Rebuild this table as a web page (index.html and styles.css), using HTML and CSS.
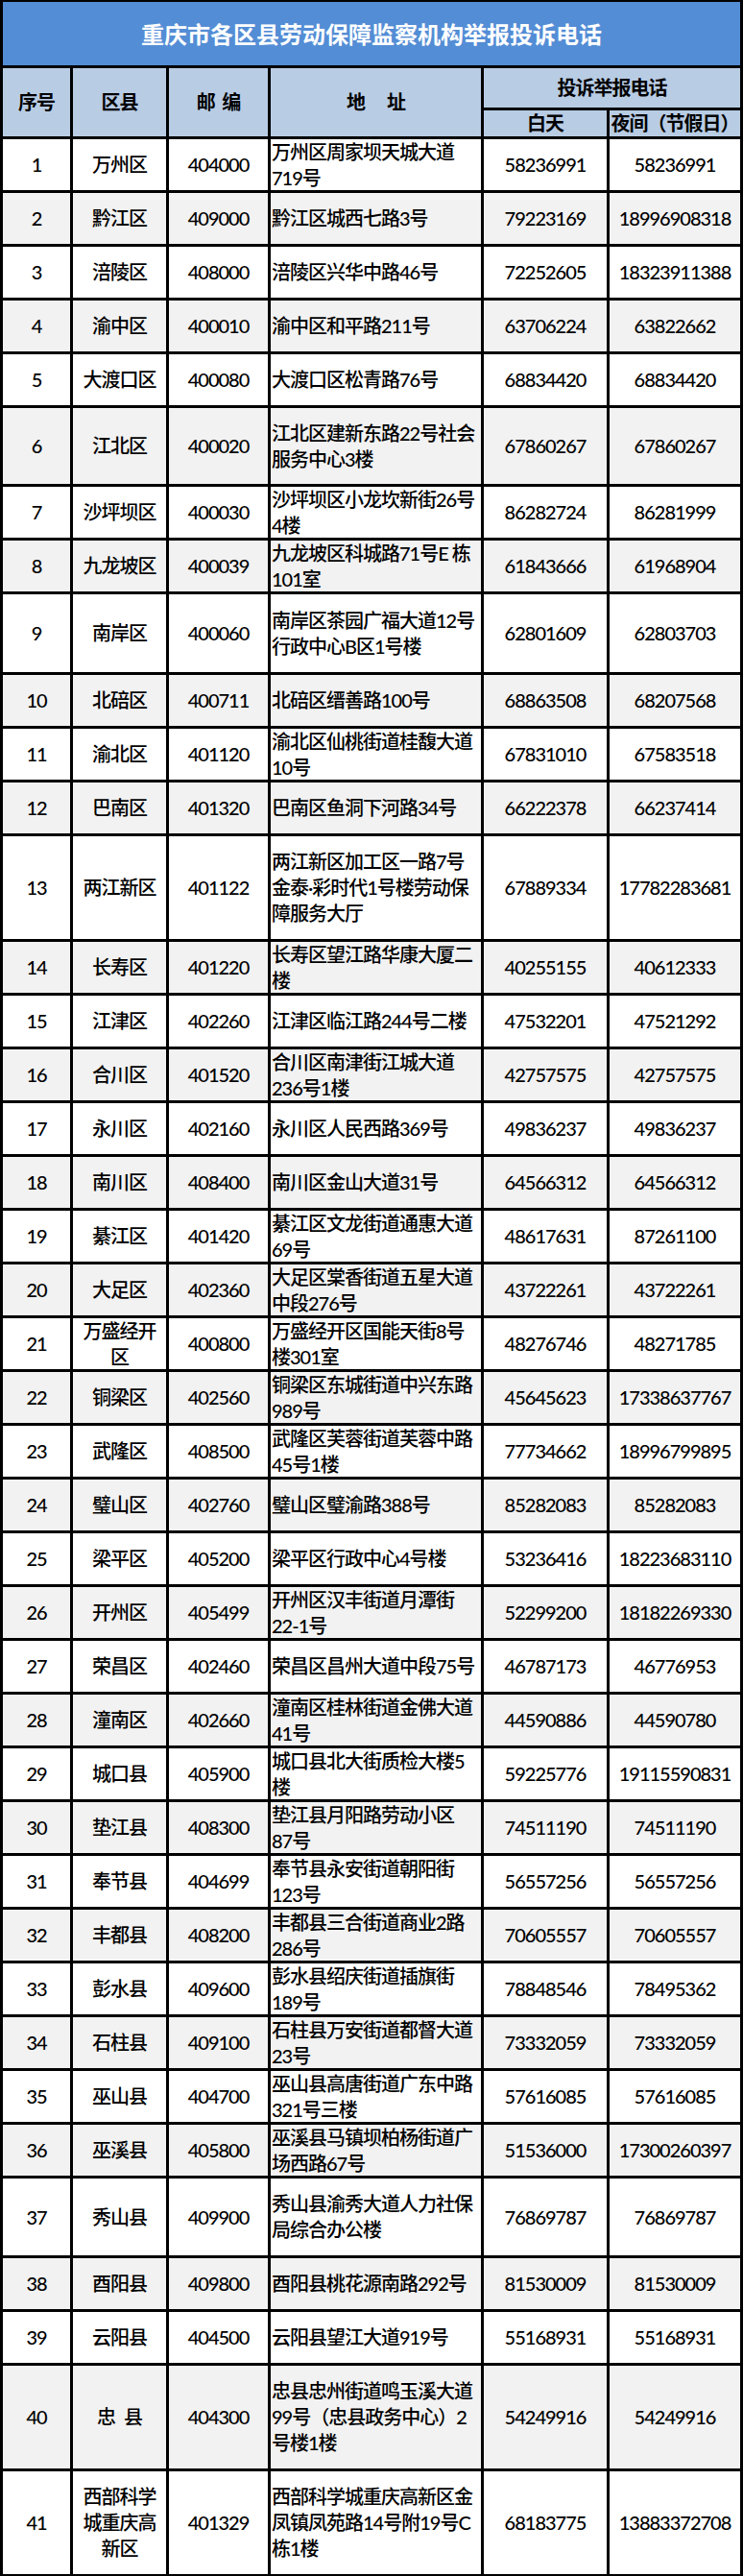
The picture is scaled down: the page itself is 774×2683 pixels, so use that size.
FILE: index.html
```html
<!DOCTYPE html>
<html lang="zh-CN">
<head>
<meta charset="utf-8">
<title>重庆市各区县劳动保障监察机构举报投诉电话</title>
<link rel="stylesheet" href="styles.css">
</head>
<body>
<div class="sheet">
  <div class="title">重庆市各区县劳动保障监察机构举报投诉电话</div>
  <div class="head">
    <div class="hc tall">序号</div>
    <div class="hc tall">区县</div>
    <div class="hc tall">邮&nbsp; 编</div>
    <div class="hc tall">地&emsp;&ensp;址</div>
    <div class="hc wide">投诉举报电话</div>
    <div class="hc">白天</div>
    <div class="hc">夜间（节假日）</div>
  </div>

  <div class="row"><div class="c">1</div><div class="c">万州区</div><div class="c">404000</div><div class="c a">万州区周家坝天城大道<br>719号</div><div class="c">58236991</div><div class="c">58236991</div></div>
  <div class="row g"><div class="c">2</div><div class="c">黔江区</div><div class="c">409000</div><div class="c a">黔江区城西七路3号</div><div class="c">79223169</div><div class="c">18996908318</div></div>
  <div class="row"><div class="c">3</div><div class="c">涪陵区</div><div class="c">408000</div><div class="c a">涪陵区兴华中路46号</div><div class="c">72252605</div><div class="c">18323911388</div></div>
  <div class="row g"><div class="c">4</div><div class="c">渝中区</div><div class="c">400010</div><div class="c a">渝中区和平路211号</div><div class="c">63706224</div><div class="c">63822662</div></div>
  <div class="row"><div class="c">5</div><div class="c">大渡口区</div><div class="c">400080</div><div class="c a">大渡口区松青路76号</div><div class="c">68834420</div><div class="c">68834420</div></div>
  <div class="row g h82"><div class="c">6</div><div class="c">江北区</div><div class="c">400020</div><div class="c a">江北区建新东路22号社会<br>服务中心3楼</div><div class="c">67860267</div><div class="c">67860267</div></div>
  <div class="row"><div class="c">7</div><div class="c">沙坪坝区</div><div class="c">400030</div><div class="c a">沙坪坝区小龙坎新街26号<br>4楼</div><div class="c">86282724</div><div class="c">86281999</div></div>
  <div class="row g"><div class="c">8</div><div class="c">九龙坡区</div><div class="c">400039</div><div class="c a">九龙坡区科城路71号E 栋<br>101室</div><div class="c">61843666</div><div class="c">61968904</div></div>
  <div class="row h84"><div class="c">9</div><div class="c">南岸区</div><div class="c">400060</div><div class="c a">南岸区茶园广福大道12号<br>行政中心B区1号楼</div><div class="c">62801609</div><div class="c">62803703</div></div>
  <div class="row g"><div class="c">10</div><div class="c">北碚区</div><div class="c">400711</div><div class="c a">北碚区缙善路100号</div><div class="c">68863508</div><div class="c">68207568</div></div>
  <div class="row"><div class="c">11</div><div class="c">渝北区</div><div class="c">401120</div><div class="c a">渝北区仙桃街道桂馥大道<br>10号</div><div class="c">67831010</div><div class="c">67583518</div></div>
  <div class="row g"><div class="c">12</div><div class="c">巴南区</div><div class="c">401320</div><div class="c a">巴南区鱼洞下河路34号</div><div class="c">66222378</div><div class="c">66237414</div></div>
  <div class="row h110"><div class="c">13</div><div class="c">两江新区</div><div class="c">401122</div><div class="c a">两江新区加工区一路7号<br>金泰·彩时代1号楼劳动保<br>障服务大厅</div><div class="c">67889334</div><div class="c">17782283681</div></div>
  <div class="row g"><div class="c">14</div><div class="c">长寿区</div><div class="c">401220</div><div class="c a">长寿区望江路华康大厦二<br>楼</div><div class="c">40255155</div><div class="c">40612333</div></div>
  <div class="row"><div class="c">15</div><div class="c">江津区</div><div class="c">402260</div><div class="c a">江津区临江路244号二楼</div><div class="c">47532201</div><div class="c">47521292</div></div>
  <div class="row g"><div class="c">16</div><div class="c">合川区</div><div class="c">401520</div><div class="c a">合川区南津街江城大道<br>236号1楼</div><div class="c">42757575</div><div class="c">42757575</div></div>
  <div class="row"><div class="c">17</div><div class="c">永川区</div><div class="c">402160</div><div class="c a">永川区人民西路369号</div><div class="c">49836237</div><div class="c">49836237</div></div>
  <div class="row g"><div class="c">18</div><div class="c">南川区</div><div class="c">408400</div><div class="c a">南川区金山大道31号</div><div class="c">64566312</div><div class="c">64566312</div></div>
  <div class="row"><div class="c">19</div><div class="c">綦江区</div><div class="c">401420</div><div class="c a">綦江区文龙街道通惠大道<br>69号</div><div class="c">48617631</div><div class="c">87261100</div></div>
  <div class="row g"><div class="c">20</div><div class="c">大足区</div><div class="c">402360</div><div class="c a">大足区棠香街道五星大道<br>中段276号</div><div class="c">43722261</div><div class="c">43722261</div></div>
  <div class="row"><div class="c">21</div><div class="c">万盛经开<br>区</div><div class="c">400800</div><div class="c a">万盛经开区国能天街8号<br>楼301室</div><div class="c">48276746</div><div class="c">48271785</div></div>
  <div class="row g"><div class="c">22</div><div class="c">铜梁区</div><div class="c">402560</div><div class="c a">铜梁区东城街道中兴东路<br>989号</div><div class="c">45645623</div><div class="c">17338637767</div></div>
  <div class="row"><div class="c">23</div><div class="c">武隆区</div><div class="c">408500</div><div class="c a">武隆区芙蓉街道芙蓉中路<br>45号1楼</div><div class="c">77734662</div><div class="c">18996799895</div></div>
  <div class="row g"><div class="c">24</div><div class="c">璧山区</div><div class="c">402760</div><div class="c a">璧山区璧渝路388号</div><div class="c">85282083</div><div class="c">85282083</div></div>
  <div class="row"><div class="c">25</div><div class="c">梁平区</div><div class="c">405200</div><div class="c a">梁平区行政中心4号楼</div><div class="c">53236416</div><div class="c">18223683110</div></div>
  <div class="row g"><div class="c">26</div><div class="c">开州区</div><div class="c">405499</div><div class="c a">开州区汉丰街道月潭街<br>22-1号</div><div class="c">52299200</div><div class="c">18182269330</div></div>
  <div class="row"><div class="c">27</div><div class="c">荣昌区</div><div class="c">402460</div><div class="c a">荣昌区昌州大道中段75号</div><div class="c">46787173</div><div class="c">46776953</div></div>
  <div class="row g"><div class="c">28</div><div class="c">潼南区</div><div class="c">402660</div><div class="c a">潼南区桂林街道金佛大道<br>41号</div><div class="c">44590886</div><div class="c">44590780</div></div>
  <div class="row"><div class="c">29</div><div class="c">城口县</div><div class="c">405900</div><div class="c a">城口县北大街质检大楼5<br>楼</div><div class="c">59225776</div><div class="c">19115590831</div></div>
  <div class="row g"><div class="c">30</div><div class="c">垫江县</div><div class="c">408300</div><div class="c a">垫江县月阳路劳动小区<br>87号</div><div class="c">74511190</div><div class="c">74511190</div></div>
  <div class="row"><div class="c">31</div><div class="c">奉节县</div><div class="c">404699</div><div class="c a">奉节县永安街道朝阳街<br>123号</div><div class="c">56557256</div><div class="c">56557256</div></div>
  <div class="row g"><div class="c">32</div><div class="c">丰都县</div><div class="c">408200</div><div class="c a">丰都县三合街道商业2路<br>286号</div><div class="c">70605557</div><div class="c">70605557</div></div>
  <div class="row"><div class="c">33</div><div class="c">彭水县</div><div class="c">409600</div><div class="c a">彭水县绍庆街道插旗街<br>189号</div><div class="c">78848546</div><div class="c">78495362</div></div>
  <div class="row g"><div class="c">34</div><div class="c">石柱县</div><div class="c">409100</div><div class="c a">石柱县万安街道都督大道<br>23号</div><div class="c">73332059</div><div class="c">73332059</div></div>
  <div class="row"><div class="c">35</div><div class="c">巫山县</div><div class="c">404700</div><div class="c a">巫山县高唐街道广东中路<br>321号三楼</div><div class="c">57616085</div><div class="c">57616085</div></div>
  <div class="row g"><div class="c">36</div><div class="c">巫溪县</div><div class="c">405800</div><div class="c a">巫溪县马镇坝柏杨街道广<br>场西路67号</div><div class="c">51536000</div><div class="c">17300260397</div></div>
  <div class="row h83"><div class="c">37</div><div class="c">秀山县</div><div class="c">409900</div><div class="c a">秀山县渝秀大道人力社保<br>局综合办公楼</div><div class="c">76869787</div><div class="c">76869787</div></div>
  <div class="row g"><div class="c">38</div><div class="c">酉阳县</div><div class="c">409800</div><div class="c a">酉阳县桃花源南路292号</div><div class="c">81530009</div><div class="c">81530009</div></div>
  <div class="row"><div class="c">39</div><div class="c">云阳县</div><div class="c">404500</div><div class="c a">云阳县望江大道919号</div><div class="c">55168931</div><div class="c">55168931</div></div>
  <div class="row g h110"><div class="c">40</div><div class="c">忠&ensp;县</div><div class="c">404300</div><div class="c a">忠县忠州街道鸣玉溪大道<br>99号（忠县政务中心）2<br>号楼1楼</div><div class="c">54249916</div><div class="c">54249916</div></div>
  <div class="row h110"><div class="c">41</div><div class="c">西部科学<br>城重庆高<br>新区</div><div class="c">401329</div><div class="c a">西部科学城重庆高新区金<br>凤镇凤苑路14号附19号C<br>栋1楼</div><div class="c">68183775</div><div class="c">13883372708</div></div>
</div>
</body>
</html>
```

FILE: styles.css
```css
html, body {
  margin: 0;
  padding: 0;
  background: #ffffff;
}

.sheet {
  box-sizing: border-box;
  width: 774px;
  padding: 2px 3px 2px 3px;
  background: #000000;
  display: flex;
  flex-direction: column;
  gap: 3px;
  font-family: Lato, "Noto Sans CJK SC", sans-serif;
  font-size: 20px;
  letter-spacing: -1px;
  line-height: 27px;
  font-weight: 500;
  color: #000000;
}

.title {
  height: 66px;
  background: #538dd5;
  color: #ffffff;
  font-size: 24px;
  font-weight: 700;
  letter-spacing: 0;
  display: flex;
  align-items: center;
  justify-content: center;
}

.head,
.row {
  display: grid;
  grid-template-columns: 70px 97px 103px 219px 128px 136px;
  column-gap: 3px;
}

.head {
  grid-template-rows: 41px 27px;
  row-gap: 3px;
}

.hc {
  background: #b8cce4;
  font-weight: 700;
  display: flex;
  align-items: center;
  justify-content: center;
  white-space: nowrap;
}

.hc.tall { grid-row: 1 / 3; }
.hc.wide { grid-column: 5 / 7; }

.row { height: 53px; }
.row.h82 { height: 79px; }
.row.h83 { height: 80px; }
.row.h84 { height: 81px; }
.row.h110 { height: 107px; }

.c {
  background: #ffffff;
  display: flex;
  flex-direction: column;
  justify-content: center;
  text-align: center;
  white-space: nowrap;
  overflow: hidden;
}

.row.g .c { background: #f2f2f2; }

.c.a {
  text-align: left;
  padding-left: 1px;
}
```
